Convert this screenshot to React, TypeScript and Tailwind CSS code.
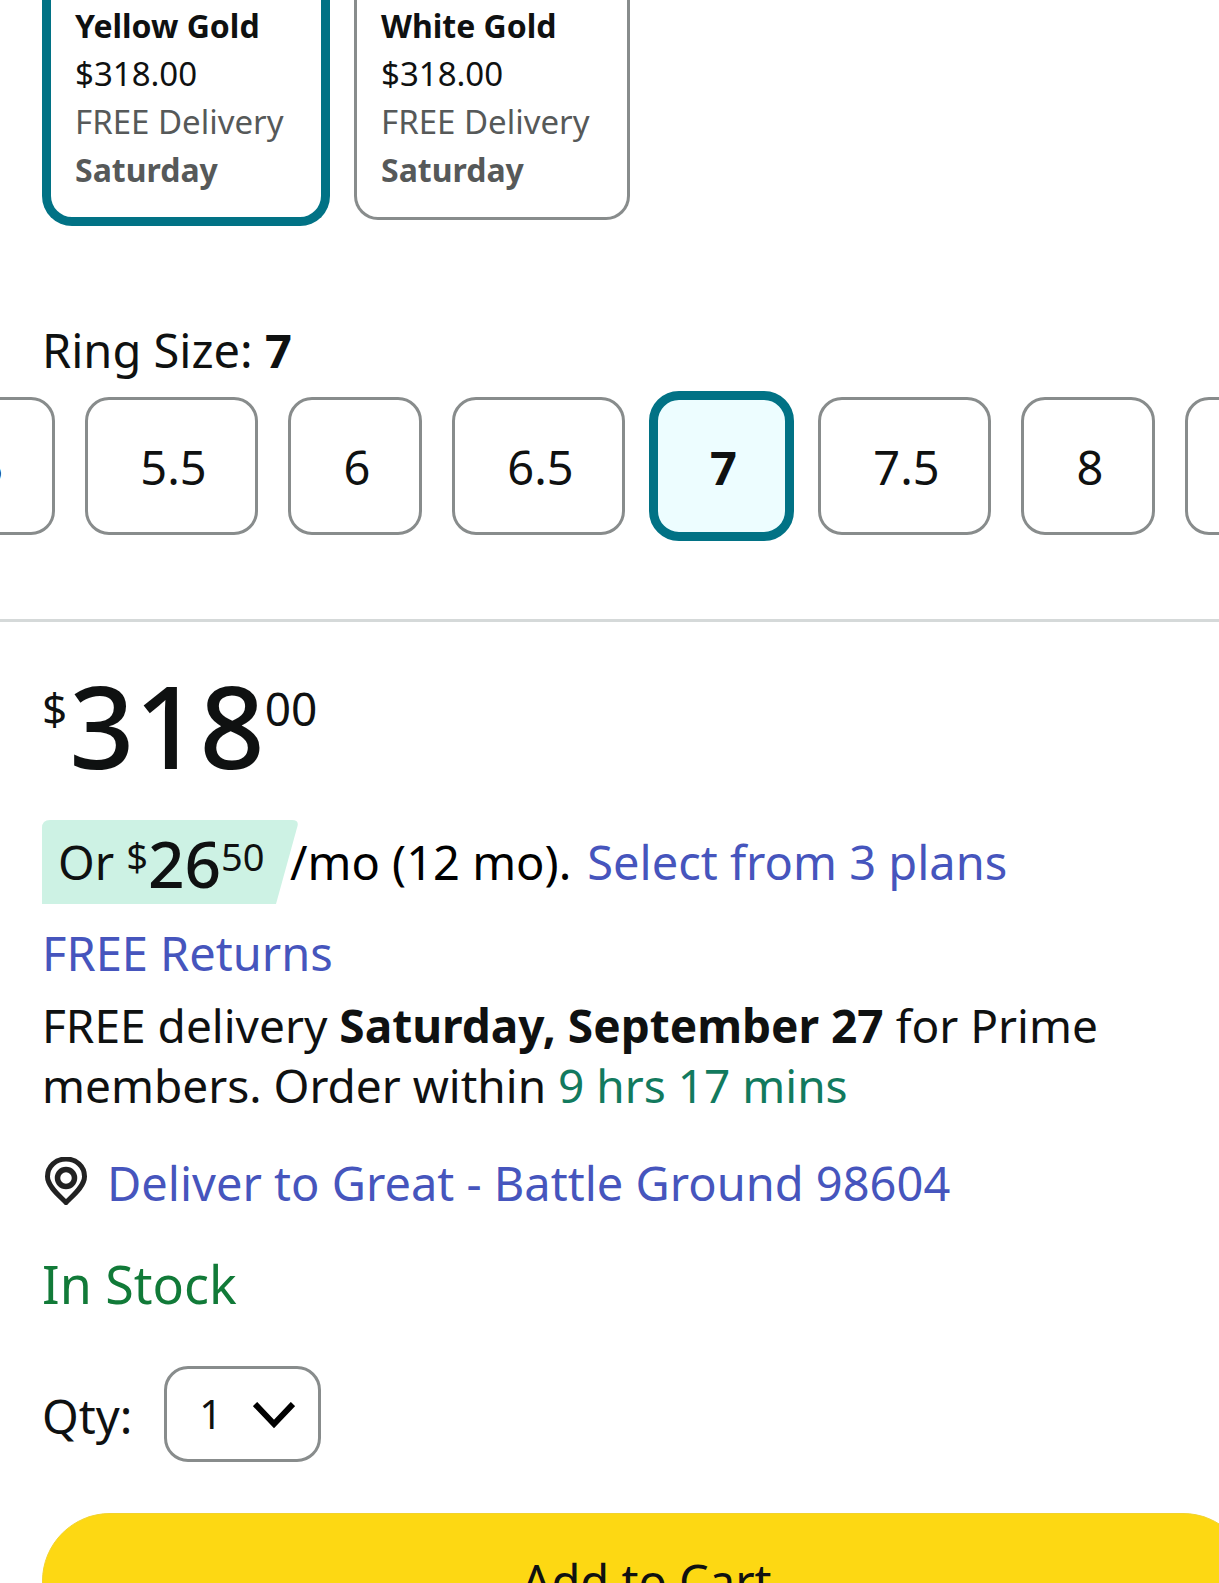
const colors = [
  { name: 'Yellow Gold', price: '$318.00', selected: true },
  { name: 'White Gold', price: '$318.00', selected: false },
];

const sizes = ['5', '5.5', '6', '6.5', '7', '7.5', '8', '8.5'];
const selectedSize = '7';

function ColorCard({ name, price, selected }: { name: string; price: string; selected: boolean }) {
  return (
    <button
      type="button"
      aria-pressed={selected}
      className={`border-t-0 px-6 pt-0.5 pb-[23px] text-left text-[33px] leading-[48px] whitespace-nowrap ${
        selected
          ? '-mx-1.5 -mb-1.5 w-72 rounded-b-[30px] border-[9px] border-[#017285]'
          : 'mb-0 w-[276px] rounded-b-3xl border-[3px] border-[#888c8c]'
      }`}
    >
      <span className="block text-[32px] font-bold">{name}</span>
      <span className="block">{price}</span>
      <span className="block text-[#565959]">FREE Delivery</span>
      <span className="block text-[32px] font-bold text-[#565959]">Saturday</span>
    </button>
  );
}

function SizeButton({ size, selected }: { size: string; selected: boolean }) {
  const width = size.length > 1 ? 'w-[173px]' : 'w-[134px]';
  return (
    <button
      type="button"
      aria-pressed={selected}
      className={`shrink-0 pt-0.5 pl-1 ${
        selected
          ? '-m-1.5 h-[150px] w-[145px] rounded-[30px] border-[9px] border-[#017285] bg-[#edfdff] font-bold'
          : `h-[138px] rounded-3xl border-[3px] border-[#888c8c] bg-white ${width}`
      }`}
    >
      {size}
    </button>
  );
}

function PinIcon() {
  return (
    <svg viewBox="0 0 42 48" className="mt-1 h-12 w-[42px] shrink-0" fill="none" stroke="#222" aria-hidden="true">
      <path d="M21 45.5C16 40 2.500 30 2.500 19.500C2.500 9 11 2 21 2s18.500 7 18.500 17.500C39.500 30 26 40 21 45.500Z" strokeWidth="5" />
      <circle cx="21" cy="21" r="8.500" strokeWidth="5.500" />
    </svg>
  );
}

export default function App() {
  return (
    <main className="h-screen overflow-hidden bg-white font-['Noto_Sans',sans-serif] text-[47px] leading-[60px] text-[#0f1111]">
      <div className="flex items-start gap-[30px] pl-12">
        {colors.map((c) => (
          <ColorCard key={c.name} {...c} />
        ))}
      </div>

      <h2 className="mt-[100px] pl-[42px]">
        Ring Size: <span className="font-bold">{selectedSize}</span>
      </h2>
      <div className="mt-[17px] -ml-[79px] flex gap-[30px]">
        {sizes.map((s) => (
          <SizeButton key={s} size={s} selected={s === selectedSize} />
        ))}
      </div>

      <hr className="mt-[84px] border-t-[3px] border-[#d5d9d9]" />

      <div className="pl-[42px]">
        <p className="mt-12 flex items-start">
          <span className="mt-2 text-[44px]">$</span>
          <span className="ml-0.5 text-[114px] leading-[110px] font-medium">318</span>
          <span className="mt-2 text-[46px]">00</span>
        </p>

        <p className="mt-10 flex items-center whitespace-nowrap">
          <span className="relative flex h-21 w-64 shrink-0 items-center pl-4">
            <svg viewBox="0 0 256 84" preserveAspectRatio="none" className="absolute inset-0 size-full" aria-hidden="true">
              <path d="M0 84V8Q0 0 8 0H250Q257 0 255.500 6L234 84Z" fill="#cdf2e4" />
            </svg>
            <span className="relative mr-3">Or</span>
            <span className="relative flex items-start pt-1">
              <span className="-mt-2 text-[38px]">$</span>
              <span className="text-[64px] font-medium">26</span>
              <span className="-mt-2 text-[38px]">50</span>
            </span>
          </span>
          <span className="-ml-2 text-black">/mo (12 mo).</span>
          <a href="#plans" className="ml-4 text-[#4655bd]">Select from 3 plans</a>
        </p>

        <p className="mt-[19px]">
          <a href="#returns" className="text-[#4655bd]">FREE Returns</a>
        </p>
        <p className="mt-3 text-[46px]">
          FREE delivery <b className="font-bold">Saturday, September 27</b> for Prime
          <br />
          members. Order within <span className="text-[#127a5e]">9 hrs 17 mins</span>
        </p>

        <a href="#location" className="mt-[38px] flex items-start gap-5 pl-[3px] text-[#4655bd]">
          <PinIcon />
          <span>Deliver to Great - Battle Ground 98604</span>
        </a>

        <p className="mt-[41px] text-[52px] text-[#117a38]">In Stock</p>

        <div className="mt-[52px] flex items-center">
          <label htmlFor="qty" className="pt-1">Qty:</label>
          <div className="relative ml-8">
            <select
              id="qty"
              defaultValue="1"
              className="block h-24 w-[157px] appearance-none rounded-3xl border-[3px] border-[#888c8c] bg-white pl-8 text-[40px]"
            >
              <option>1</option>
              <option>2</option>
              <option>3</option>
            </select>
            <svg viewBox="0 0 42 27" className="pointer-events-none absolute top-9 right-[26px] h-[27px] w-[42px]" fill="none" stroke="#000" strokeWidth="6" aria-hidden="true">
              <path d="M2 2L21 22L40 2" />
            </svg>
          </div>
        </div>

        <div className="mt-[51px] -mr-8">
          <button type="button" className="h-[136px] w-full rounded-full border border-[#f2d32c] bg-[#fdd813]">
            Add to Cart
          </button>
        </div>
      </div>
    </main>
  );
}
